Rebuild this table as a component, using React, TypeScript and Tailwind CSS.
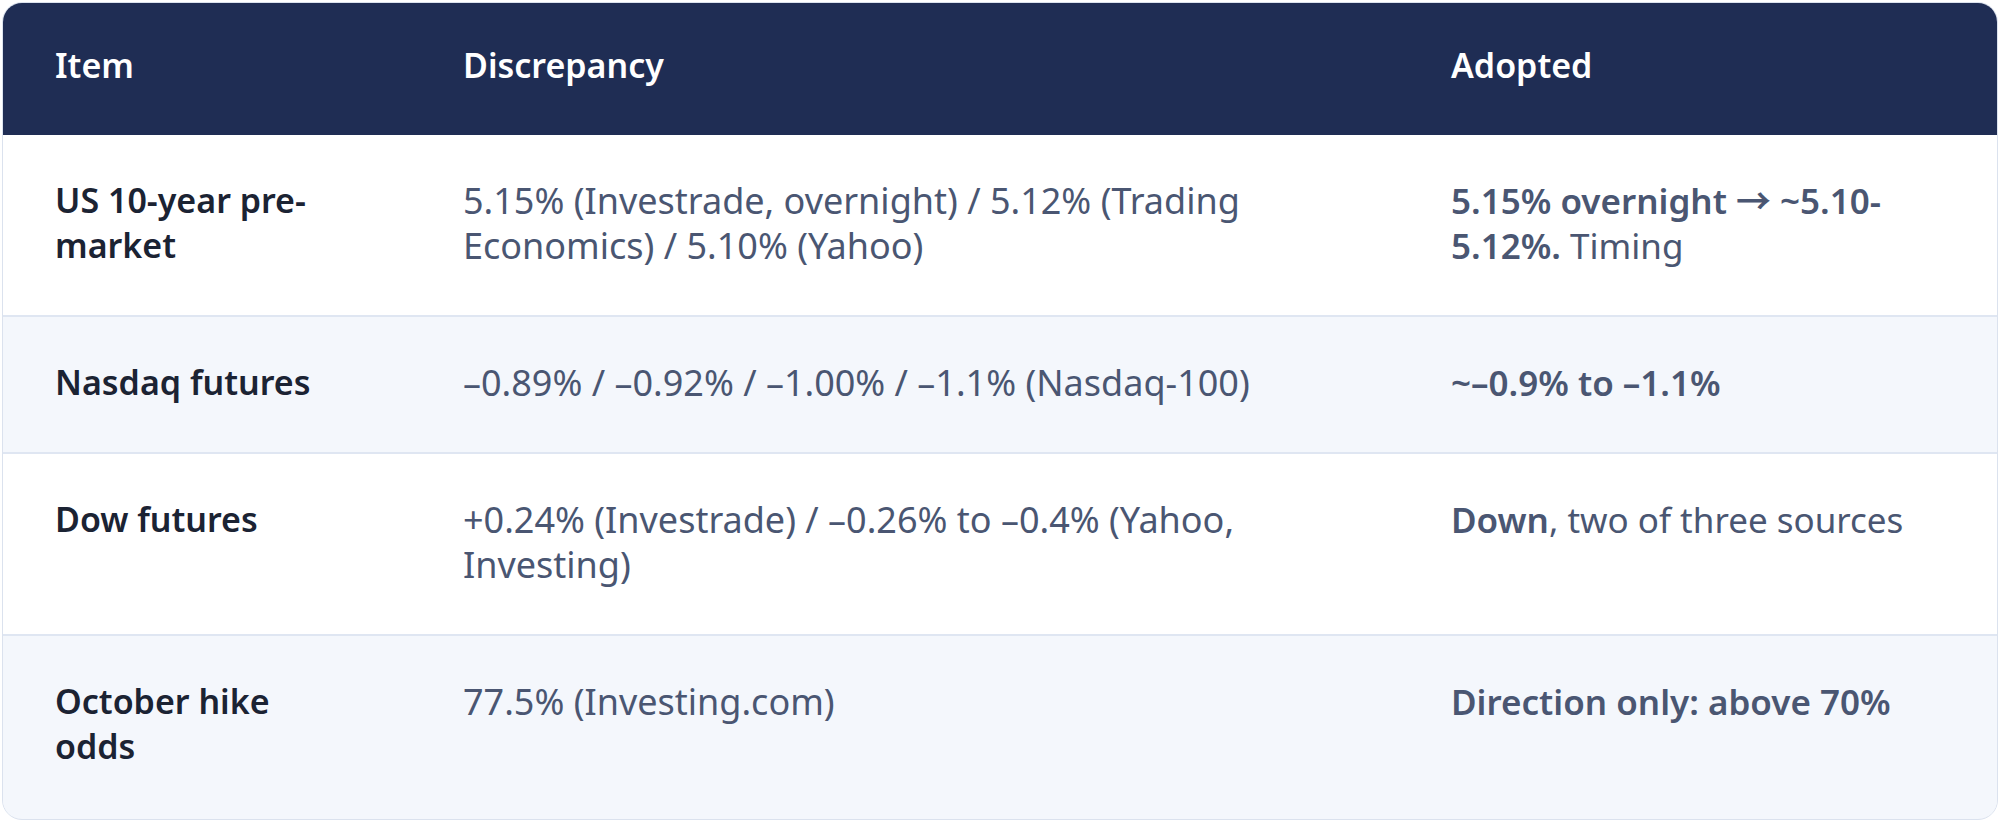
import React from "react";

type Row = {
  item: string;
  discrepancy: string;
  adopted: { strong: string[]; rest?: string };
  shaded: boolean;
};

const ROWS: Row[] = [
  {
    item: "US 10-year pre-market",
    discrepancy: "5.15% (Investrade, overnight) / 5.12% (Trading Economics) / 5.10% (Yahoo)",
    adopted: { strong: ["5.15% overnight → ~5.10-", "5.12%."], rest: " Timing" },
    shaded: false,
  },
  {
    item: "Nasdaq futures",
    discrepancy: "–0.89% / –0.92% / –1.00% / –1.1% (Nasdaq-100)",
    adopted: { strong: ["~–0.9% to –1.1%"] },
    shaded: true,
  },
  {
    item: "Dow futures",
    discrepancy: "+0.24% (Investrade) / –0.26% to –0.4% (Yahoo, Investing)",
    adopted: { strong: ["Down"], rest: ", two of three sources" },
    shaded: false,
  },
  {
    item: "October hike odds",
    discrepancy: "77.5% (Investing.com)",
    adopted: { strong: ["Direction only: above 70%"] },
    shaded: true,
  },
];

const FONT = { fontFamily: '"Noto Sans", "Noto Sans CJK KR", sans-serif' };

export default function App() {
  return (
    <div className="w-[2000px] h-[822px] bg-white p-[2px]" style={FONT}>
      <div className="h-full rounded-[20px] border border-[#dbe2ee] overflow-hidden bg-[#f4f7fc]">
        {/* Header */}
        <div className="grid grid-cols-[408px_988px_1fr] bg-[#1f2d54] text-white text-[34px] leading-[45px] font-semibold">
          <div className="pl-[52px] pt-[40px] pb-[47px]">Item</div>
          <div className="pl-[52px] pt-[40px] pb-[47px]">Discrepancy</div>
          <div className="pl-[52px] pt-[40px] pb-[47px]">Adopted</div>
        </div>

        {/* Body */}
        {ROWS.map((row, i) => (
          <div
            key={i}
            className={`grid grid-cols-[408px_988px_1fr] leading-[45px] ${
              i > 0 ? "border-t-2 border-[#dfe6f2]" : ""
            } ${row.shaded ? "bg-[#f4f7fc]" : "bg-white"}`}
          >
            <div className="pl-[52px] pr-[70px] pt-[43px] pb-[47px] text-[34px] font-semibold text-[#1b2333]">
              {row.item}
            </div>
            <div className="pl-[52px] pr-[52px] pt-[43px] pb-[47px] text-[36px] text-[#4a5672]">
              {row.discrepancy}
            </div>
            <div className="pl-[52px] pr-[52px] pt-[43px] pb-[47px] text-[35px] text-[#4a5672]">
              {row.adopted.strong.map((s, j) => (
                <span key={j} className="font-semibold">
                  {s}
                </span>
              ))}
              {row.adopted.rest}
            </div>
          </div>
        ))}
      </div>
    </div>
  );
}
